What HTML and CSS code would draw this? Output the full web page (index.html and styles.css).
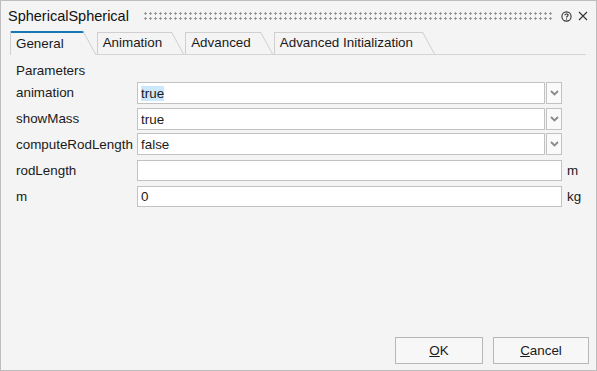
FILE: index.html
```html
<!DOCTYPE html>
<html>
<head>
<meta charset="utf-8">
<link rel="stylesheet" href="styles.css">
</head>
<body>
<div class="dialog">
  <div class="titlebar">
    <span class="title">SphericalSpherical</span>
    <span class="grip"></span>
    <span class="help"><svg width="11" height="11" viewBox="0 0 11 11"><circle cx="5.5" cy="5.5" r="4.6" fill="none" stroke="#333" stroke-width="1.1"/><path d="M3.9 4.3 C3.9 2.6 7.1 2.6 7.1 4.2 C7.1 5.3 5.5 5.3 5.5 6.6" fill="none" stroke="#333" stroke-width="1.1"/><rect x="5" y="7.4" width="1.1" height="1.1" fill="#333"/></svg></span>
    <span class="close"><svg width="10" height="10" viewBox="0 0 10 10"><path d="M1 1 L9 9 M9 1 L1 9" stroke="#333" stroke-width="1.1"/></svg></span>
  </div>
  <div class="tabs">
    <div class="tab active">General</div>
    <div class="tab">Animation</div>
    <div class="tab">Advanced</div>
    <div class="tab">Advanced Initialization</div>
  </div>
  <div class="content">
    <div class="section">Parameters</div>
    <div class="grid">
      <div class="lbl">animation</div>
      <div class="combo"><div class="field"><span class="sel">true</span></div><div class="drop"><svg width="9" height="6" viewBox="0 0 9 6"><path d="M1 1 L4.5 4.5 L8 1" fill="none" stroke="#8a8a8a" stroke-width="1.8"/></svg></div></div>
      <div class="unit"></div>
      <div class="lbl">showMass</div>
      <div class="combo"><div class="field">true</div><div class="drop"><svg width="9" height="6" viewBox="0 0 9 6"><path d="M1 1 L4.5 4.5 L8 1" fill="none" stroke="#8a8a8a" stroke-width="1.8"/></svg></div></div>
      <div class="unit"></div>
      <div class="lbl">computeRodLength</div>
      <div class="combo"><div class="field">false</div><div class="drop"><svg width="9" height="6" viewBox="0 0 9 6"><path d="M1 1 L4.5 4.5 L8 1" fill="none" stroke="#8a8a8a" stroke-width="1.8"/></svg></div></div>
      <div class="unit"></div>
      <div class="lbl">rodLength</div>
      <div class="field text"></div>
      <div class="unit">m</div>
      <div class="lbl">m</div>
      <div class="field text">0</div>
      <div class="unit">kg</div>
    </div>
  </div>
  <div class="buttons">
    <button class="btn ok"><u>O</u>K</button>
    <button class="btn cancel"><u>C</u>ancel</button>
  </div>
</div>
</body>
</html>
```
FILE: styles.css
```css
* { box-sizing: border-box; }
html, body { margin: 0; padding: 0; }
body {
  width: 597px; height: 371px; overflow: hidden;
  font-family: "Liberation Sans", Arial, sans-serif;
  font-size: 13.4px; color: #1a1a1a;
}
.dialog {
  width: 597px; height: 371px;
  background: #f4f4f4;
  border: 1px solid #bdbdbd;
  display: flex; flex-direction: column;
}
.titlebar {
  height: 30px;
  display: flex; align-items: center;
  padding: 0 8px 0 7px;
}
.title { font-size: 14.5px; color: #111; }
.grip {
  flex: 1; height: 10px; margin: 0 8px 0 14px;
  background-image: radial-gradient(circle, #999 1px, transparent 1.3px);
  background-size: 5px 5px;
  background-position: 0 0;
}
.help { display: flex; margin-right: 6px; }
.close { display: flex; }
.tabs {
  display: flex; height: 24px;
  margin: 0 10px 0 9px;
  align-items: flex-end;
  border-bottom: 1px solid #d4d4d4;
}
.tab {
  position: relative;
  height: 22px;
  padding: 3px 22px 0 5px;
  margin-right: 1px;
  border-left: 1px solid #cfcfcf;
  color: #1a1a1a;
  white-space: nowrap;
}
.tab::before {
  content: ""; position: absolute;
  left: 0; right: 12px; top: 0; height: 1px;
  background: #cfcfcf;
}
.tab::after {
  content: ""; position: absolute;
  right: 6px; top: 0; width: 1px; height: 100%;
  background: #cfcfcf;
  transform: skewX(28.6deg);
}
.tab.active {
  height: 24px;
  padding-top: 5px;
  padding-right: 32px;
  margin-bottom: -1px;
  background: #f4f4f4;
}
.tab.active::before { background: #1578b3; height: 2px; }
.content { padding: 8px 0 0 15px; flex: 1; }
.section { height: 17px; }
.grid {
  display: grid;
  grid-template-columns: 121px 425px 30px;
  grid-auto-rows: 25.8px;
  align-items: center;
  margin-top: 0;
}
.lbl { white-space: nowrap; }
.unit { padding-left: 5px; }
.combo { display: flex; height: 22px; }
.combo .field { flex: 1; }
.field {
  height: 22px;
  background: #fff;
  border: 1px solid #c2c2c2;
  padding: 3px 3px 0 3px;
}
.field.text { height: 21px; padding-top: 2px; }
.sel { background: #cce8ff; }
.drop {
  width: 16px; height: 22px;
  margin-left: 1px;
  border: 1px solid #c2c2c2;
  background: #fafafa;
  display: flex; align-items: center; justify-content: center;
}
.buttons {
  display: flex; justify-content: flex-end; gap: 10px;
  padding: 0 7px 6px 0;
}
.btn {
  height: 27px;
  font-family: "Liberation Sans", Arial, sans-serif;
  font-size: 13.4px; color: #1a1a1a;
  background: #f7f7f7;
  border: 1px solid #b7b7b7;
  border-radius: 0;
}
.ok { width: 88px; }
.cancel { width: 96px; }
```
